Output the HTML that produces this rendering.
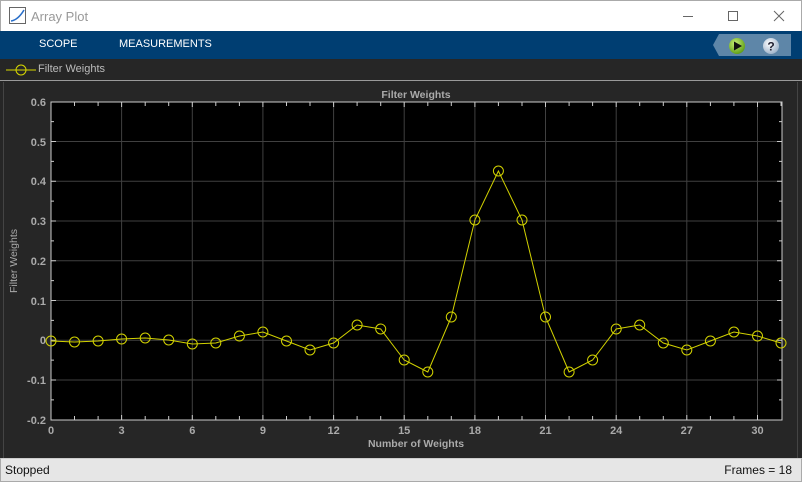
<!DOCTYPE html>
<html><head><meta charset="utf-8"><style>
*{margin:0;padding:0;box-sizing:border-box}
body{width:802px;height:482px;overflow:hidden;background:#262626;font-family:"Liberation Sans",Arial,sans-serif;position:relative}
.title{position:absolute;left:0;top:0;width:802px;height:31px;background:#fff;border:1px solid #aaa;border-bottom:none}
.title span{position:absolute;left:30px;top:8px;font-size:13px;color:#999}
.tb{position:absolute;left:0;top:31px;width:802px;height:28px;background:#003e72}
.tb span{position:absolute;top:7px;font-size:11px;color:#fff}
.leg{position:absolute;left:0;top:59px;width:802px;height:22px;background:#262626;border-bottom:1px solid #9a9a9a}
.leg span{position:absolute;left:38px;top:4px;font-size:11px;color:#bbb}
.status{position:absolute;left:0;top:458px;width:802px;height:24px;background:#e6e6e6;border:1px solid #aaa;border-top:1px solid #ccc;font-size:12px;color:#111}
</style></head><body>
<div class="title">
<svg style="position:absolute;left:8px;top:6px" width="18" height="18"><rect x="0.5" y="0.5" width="16" height="16" fill="#fff" stroke="#666"/><path d="M2 14 Q9 13 15 3" stroke="#2a6fc9" stroke-width="1.6" fill="none"/></svg>
<span>Array Plot</span>
<svg style="position:absolute;left:676px;top:8px" width="120" height="16"><line x1="6" y1="7.5" x2="16" y2="7.5" stroke="#666"/><rect x="51.5" y="2.5" width="9" height="9" fill="none" stroke="#666"/><path d="M97 2 L107 12 M107 2 L97 12" stroke="#666"/></svg>
</div>
<div class="tb"><span style="left:39px">SCOPE</span><span style="left:119px">MEASUREMENTS</span>
<svg style="position:absolute;left:711px;top:2px" width="80" height="24"><path d="M8 1 H80 V23 H8 L2 12 Z" fill="#5e86a8"/>
<defs><radialGradient id="g" cx="0.4" cy="0.35" r="0.7"><stop offset="0" stop-color="#c8f07a"/><stop offset="1" stop-color="#5a9a10"/></radialGradient><radialGradient id="w" cx="0.4" cy="0.35" r="0.7"><stop offset="0" stop-color="#fff"/><stop offset="1" stop-color="#9ab0c8"/></radialGradient></defs>
<circle cx="26" cy="13" r="8" fill="url(#g)"/><path d="M23 8.5 L31 13 L23 17.5Z" fill="#111"/>
<circle cx="60" cy="13" r="8" fill="url(#w)"/><text x="60" y="17.5" font-size="12" font-weight="bold" text-anchor="middle" fill="#223" font-family="Liberation Sans">?</text></svg>
</div>
<div class="leg"><svg style="position:absolute;left:5px;top:4px" width="32" height="14"><line x1="1" y1="7" x2="31" y2="7" stroke="#d8d800"/><circle cx="16" cy="7" r="5" fill="none" stroke="#d8d800"/></svg><span>Filter Weights</span></div>
<svg style="position:absolute;left:0;top:82px" width="802" height="376" viewBox="0 82 802 376" font-family="Liberation Sans" font-size="11" fill="#aaa">
<rect x="2" y="82" width="796" height="376" fill="#262626"/>
<line x1="3.5" y1="82" x2="3.5" y2="458" stroke="#444"/><line x1="797.5" y1="82" x2="797.5" y2="458" stroke="#444"/>
<text x="416" y="98" text-anchor="middle" font-weight="bold" font-size="10.5">Filter Weights</text>
<rect x="51" y="102" width="731" height="318" fill="#000"/>
<g stroke="#404040" stroke-width="1">
<path d="M121.6 102V420M192.3 102V420M262.9 102V420M333.6 102V420M404.2 102V420M474.9 102V420M545.5 102V420M616.2 102V420M686.8 102V420M757.5 102V420"/>
<path d="M51 141.5H782M51 181.3H782M51 221H782M51 260.8H782M51 300.5H782M51 340.3H782M51 380H782"/>
</g>
<rect x="51" y="102" width="731" height="318" fill="none" stroke="#ccc" stroke-width="1"/>
<g stroke="#ccc"><path d="M74.5 102v4M98.1 102v4M121.6 102v5M145.2 102v4M168.7 102v4M192.3 102v5M215.8 102v4M239.4 102v4M262.9 102v5M286.5 102v4M310 102v4M333.6 102v5M357.1 102v4M380.7 102v4M404.2 102v5M427.8 102v4M451.3 102v4M474.9 102v5M498.4 102v4M522 102v4M545.5 102v5M569.1 102v4M592.6 102v4M616.2 102v5M639.7 102v4M663.3 102v4M686.8 102v5M710.4 102v4M733.9 102v4M757.5 102v5M781 102v4"/>
<path d="M74.5 420v-4M98.1 420v-4M121.6 420v-5M145.2 420v-4M168.7 420v-4M192.3 420v-5M215.8 420v-4M239.4 420v-4M262.9 420v-5M286.5 420v-4M310 420v-4M333.6 420v-5M357.1 420v-4M380.7 420v-4M404.2 420v-5M427.8 420v-4M451.3 420v-4M474.9 420v-5M498.4 420v-4M522 420v-4M545.5 420v-5M569.1 420v-4M592.6 420v-4M616.2 420v-5M639.7 420v-4M663.3 420v-4M686.8 420v-5M710.4 420v-4M733.9 420v-4M757.5 420v-5"/>
<path d="M51 121.6h3M51 141.5h5M51 161.4h3M51 181.3h5M51 201.1h3M51 221h5M51 240.9h3M51 260.8h5M51 280.6h3M51 300.5h5M51 320.4h3M51 340.3h5M51 360.1h3M51 380h5M51 399.9h3"/>
<path d="M782 121.6h-3M782 141.5h-5M782 161.4h-3M782 181.3h-5M782 201.1h-3M782 221h-5M782 240.9h-3M782 260.8h-5M782 280.6h-3M782 300.5h-5M782 320.4h-3M782 340.3h-5M782 360.1h-3M782 380h-5M782 399.9h-3"/></g>
<g text-anchor="end" font-weight="bold"><text x="46" y="106">0.6</text><text x="46" y="146">0.5</text><text x="46" y="185">0.4</text><text x="46" y="225">0.3</text><text x="46" y="265">0.2</text><text x="46" y="305">0.1</text><text x="46" y="344">0</text><text x="46" y="384">-0.1</text><text x="46" y="424">-0.2</text></g>
<g text-anchor="middle" font-weight="bold"><text x="51" y="434">0</text><text x="121.6" y="434">3</text><text x="192.3" y="434">6</text><text x="262.9" y="434">9</text><text x="333.6" y="434">12</text><text x="404.2" y="434">15</text><text x="474.9" y="434">18</text><text x="545.5" y="434">21</text><text x="616.2" y="434">24</text><text x="686.8" y="434">27</text><text x="757.5" y="434">30</text>
<text x="416" y="447" font-size="10.5">Number of Weights</text></g>
<text transform="translate(17,261) rotate(-90)" text-anchor="middle" font-size="10.5">Filter Weights</text>
<g stroke="#d2d200" fill="none" stroke-width="1">
<polyline points="51,341 74.5,342 98.1,341 121.6,339 145.2,338 168.7,340 192.3,344 215.8,343 239.4,336 262.9,332 286.5,341 310,350 333.6,343 357.1,325 380.7,329 404.2,360 427.8,372 451.3,317 474.9,220 498.4,171 522,220 545.5,317 569.1,372 592.6,360 616.2,329 639.7,325 663.3,343 686.8,350 710.4,341 733.9,332 757.5,336 781,343"/>
<circle cx="51" cy="341" r="5"/><circle cx="74.5" cy="342" r="5"/><circle cx="98.1" cy="341" r="5"/><circle cx="121.6" cy="339" r="5"/><circle cx="145.2" cy="338" r="5"/><circle cx="168.7" cy="340" r="5"/><circle cx="192.3" cy="344" r="5"/><circle cx="215.8" cy="343" r="5"/><circle cx="239.4" cy="336" r="5"/><circle cx="262.9" cy="332" r="5"/><circle cx="286.5" cy="341" r="5"/><circle cx="310" cy="350" r="5"/><circle cx="333.6" cy="343" r="5"/><circle cx="357.1" cy="325" r="5"/><circle cx="380.7" cy="329" r="5"/><circle cx="404.2" cy="360" r="5"/><circle cx="427.8" cy="372" r="5"/><circle cx="451.3" cy="317" r="5"/><circle cx="474.9" cy="220" r="5"/><circle cx="498.4" cy="171" r="5"/><circle cx="522" cy="220" r="5"/><circle cx="545.5" cy="317" r="5"/><circle cx="569.1" cy="372" r="5"/><circle cx="592.6" cy="360" r="5"/><circle cx="616.2" cy="329" r="5"/><circle cx="639.7" cy="325" r="5"/><circle cx="663.3" cy="343" r="5"/><circle cx="686.8" cy="350" r="5"/><circle cx="710.4" cy="341" r="5"/><circle cx="733.9" cy="332" r="5"/><circle cx="757.5" cy="336" r="5"/><circle cx="781" cy="343" r="5"/>
</g>
</svg>
<div class="status"><span style="position:absolute;left:4px;top:4px">Stopped</span><span style="position:absolute;right:9px;top:4px">Frames = 18</span></div>
</body></html>
